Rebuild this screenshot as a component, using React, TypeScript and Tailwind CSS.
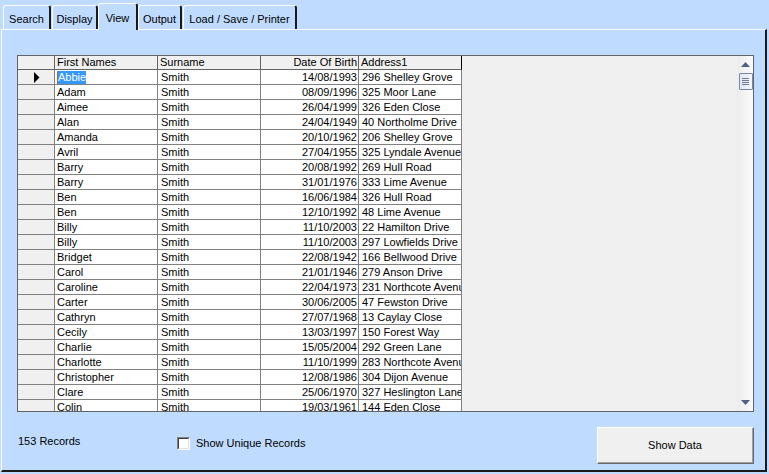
import React from "react";

const rows: [string, string, string, string][] = [
  ["Abbie", "Smith", "14/08/1993", "296 Shelley Grove"],
  ["Adam", "Smith", "08/09/1996", "325 Moor Lane"],
  ["Aimee", "Smith", "26/04/1999", "326 Eden Close"],
  ["Alan", "Smith", "24/04/1949", "40 Northolme Drive"],
  ["Amanda", "Smith", "20/10/1962", "206 Shelley Grove"],
  ["Avril", "Smith", "27/04/1955", "325 Lyndale Avenue"],
  ["Barry", "Smith", "20/08/1992", "269 Hull Road"],
  ["Barry", "Smith", "31/01/1976", "333 Lime Avenue"],
  ["Ben", "Smith", "16/06/1984", "326 Hull Road"],
  ["Ben", "Smith", "12/10/1992", "48 Lime Avenue"],
  ["Billy", "Smith", "11/10/2003", "22 Hamilton Drive"],
  ["Billy", "Smith", "11/10/2003", "297 Lowfields Drive"],
  ["Bridget", "Smith", "22/08/1942", "166 Bellwood Drive"],
  ["Carol", "Smith", "21/01/1946", "279 Anson Drive"],
  ["Caroline", "Smith", "22/04/1973", "231 Northcote Avenue"],
  ["Carter", "Smith", "30/06/2005", "47 Fewston Drive"],
  ["Cathryn", "Smith", "27/07/1968", "13 Caylay Close"],
  ["Cecily", "Smith", "13/03/1997", "150 Forest Way"],
  ["Charlie", "Smith", "15/05/2004", "292 Green Lane"],
  ["Charlotte", "Smith", "11/10/1999", "283 Northcote Avenue"],
  ["Christopher", "Smith", "12/08/1986", "304 Dijon Avenue"],
  ["Clare", "Smith", "25/06/1970", "327 Heslington Lane"],
  ["Colin", "Smith", "19/03/1961", "144 Eden Close"],
];

function Tab({ label, w, ml, selected }: { label: string; w: string; ml: string; selected?: boolean }) {
  return (
    <div
      className={
        selected
          ? `relative z-10 ${ml} ${w} h-[27px] mb-[-1px] pt-[7px] bg-[#bfdbff] border-t border-l border-white border-r-2 border-r-[#1a1a1a] rounded-t-[3px] flex justify-center leading-[14px] whitespace-nowrap`
          : `${ml} ${w} h-[24px] pt-[6px] bg-[#bfdbff] border-t border-l border-white border-r-2 border-r-[#1a1a1a] rounded-t-[3px] flex justify-center leading-[14px] whitespace-nowrap`
      }
    >
      {label}
    </div>
  );
}

export default function App() {
  return (
    <div className="w-[769px] h-[474px] bg-[#bfdbff] overflow-hidden text-[11px] text-black font-['Liberation_Sans',Arial,sans-serif]">
      {/* tabs */}
      <div className="flex items-end h-[29px]">
        <Tab label="Search" w="w-[48px]" ml="ml-[3px]" />
        <Tab label="Display" w="w-[46px]" ml="ml-[1px]" />
        <Tab label="View" w="w-[40px]" ml="ml-0" selected />
        <Tab label="Output" w="w-[44px]" ml="ml-0" />
        <Tab label="Load / Save / Printer" w="w-[114px]" ml="ml-[1px]" />
      </div>

      {/* tab page */}
      <div className="relative ml-[1px] w-[766px] h-[443px] border-t border-l border-white border-r-2 border-b-2 border-r-[#1a1a1a] border-b-[#1a1a1a] pl-[15px] pt-[25px]">
        {/* grid */}
        <div className="w-[737px] h-[357px] border border-[#646464] bg-[#f0f0f0] flex overflow-hidden">
          <div className="w-[444px] flex flex-col shrink-0">
            {/* header */}
            <div className="flex h-[14px] shrink-0 leading-[13px]">
              <div className="w-[37px] h-full border-r border-b border-[#646464] bg-[#f0f0f0]" />
              <div className="w-[103px] h-full border-r border-b border-[#646464] bg-[#f0f0f0] pl-[2px] whitespace-nowrap">First Names</div>
              <div className="w-[103px] h-full border-r border-b border-[#646464] bg-[#f0f0f0] pl-[2px] whitespace-nowrap">Surname</div>
              <div className="w-[98px] h-full border-r border-b border-[#646464] bg-[#f0f0f0] pr-[1px] text-right whitespace-nowrap">Date Of Birth</div>
              <div className="w-[103px] h-full border-r border-b border-r-black border-b-[#646464] bg-[#f0f0f0] pl-[2px] whitespace-nowrap">Address1</div>
            </div>
            {rows.map((r, i) => (
              <div key={i} className="flex h-[15px] shrink-0 leading-[14px]">
                <div className="w-[37px] h-full border-r border-b border-[#808080] bg-[#f0f0f0] flex items-start">
                  {i === 0 && (
                    <svg width="6" height="11" viewBox="0 0 6 11" className="ml-[16px] mt-[2px]">
                      <polygon points="0,0 5.5,5.5 0,11" fill="#000" />
                    </svg>
                  )}
                </div>
                <div className="w-[103px] h-full border-r border-b border-[#808080] bg-white pl-[2px] whitespace-nowrap overflow-hidden">
                  {i === 0 ? (
                    <span className="inline-block h-[13px] mt-[1px] leading-[12px] bg-[#3399ff] text-white border-l border-[#c0602a]">{r[0]}</span>
                  ) : (
                    r[0]
                  )}
                </div>
                <div className="w-[103px] h-full border-r border-b border-[#808080] bg-white pl-[3px] whitespace-nowrap overflow-hidden">{r[1]}</div>
                <div className="w-[98px] h-full border-r border-b border-[#808080] bg-white pr-[1px] text-right whitespace-nowrap overflow-hidden">{r[2]}</div>
                <div className="w-[103px] h-full border-r border-b border-[#808080] bg-white pl-[3px] whitespace-nowrap overflow-hidden">{r[3]}</div>
              </div>
            ))}
          </div>
          <div className="flex-1 bg-[#f0f0f0]" />
          {/* scrollbar */}
          <div className="w-[16px] h-full shrink-0 bg-gradient-to-r from-[#ececec] to-[#fbfbfb] flex flex-col items-center">
            <svg width="9" height="5" viewBox="0 0 9 5" className="mt-[6px] ml-[1px]">
              <polygon points="4.5,0 9,5 0,5" fill="#4d6185" />
            </svg>
            <div className="mt-[6px] ml-[1px] w-[14px] h-[17px] border border-[#7b88a6] rounded-[1px] bg-gradient-to-r from-[#dfe6f3] to-[#f4f7fc] flex flex-col items-center justify-center gap-[1px]">
              <div className="w-[7px] h-[1px] bg-[#6f7b95]" />
              <div className="w-[7px] h-[1px] bg-[#6f7b95]" />
              <div className="w-[7px] h-[1px] bg-[#6f7b95]" />
              <div className="w-[7px] h-[1px] bg-[#6f7b95]" />
            </div>
            <svg width="9" height="5" viewBox="0 0 9 5" className="mt-auto mb-[6px] ml-[1px]">
              <polygon points="0,0 9,0 4.5,5" fill="#4d6185" />
            </svg>
          </div>
        </div>

        {/* bottom row */}
        <div className="mt-[15px] w-[737px] h-[37px] flex items-start">
          <div className="w-[160px] pl-[1px] mt-[8px] leading-[13px] whitespace-nowrap">153 Records</div>
          <div className="mt-[10px] flex items-start gap-[6px]">
            <div className="w-[13px] h-[13px] border border-t-[#808080] border-l-[#808080] border-r-white border-b-white">
              <div className="w-full h-full bg-white border border-t-[#404040] border-l-[#404040] border-r-[#e0e0e0] border-b-[#e0e0e0]" />
            </div>
            <div className="leading-[13px] whitespace-nowrap">Show Unique Records</div>
          </div>
          <div className="ml-auto w-[157px] h-[37px] bg-[#f0f0f0] border border-t-white border-l-white border-r-[#696969] border-b-[#696969] flex items-center justify-center leading-[14px]">
            <div className="w-full h-full border-r border-b border-[#a0a0a0] flex items-center justify-center">Show Data</div>
          </div>
        </div>
      </div>
    </div>
  );
}
